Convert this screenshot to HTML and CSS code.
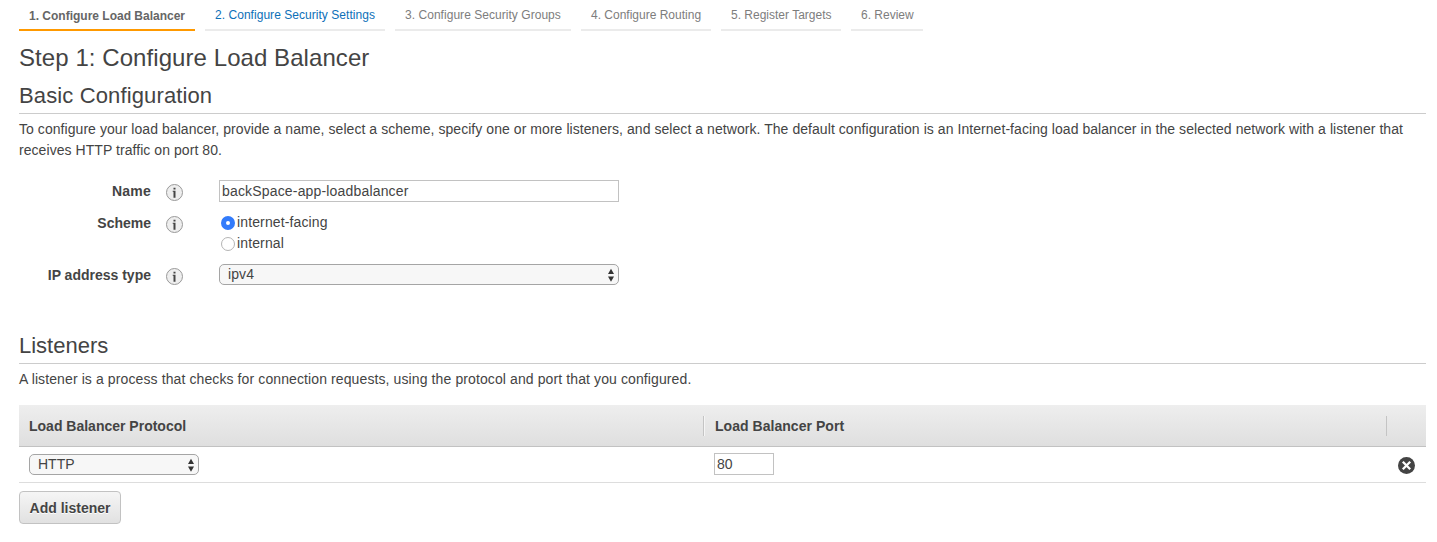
FILE: index.html
```html
<!DOCTYPE html>
<html lang="en">
<head>
<meta charset="utf-8">
<title>Configure Load Balancer</title>
<link rel="stylesheet" href="styles.css">
</head>
<body>
<nav class="steps">
  <a class="step step-active"><span>1. Configure Load Balancer</span></a>
  <a class="step step-next"><span>2. Configure Security Settings</span></a>
  <a class="step w176"><span>3. Configure Security Groups</span></a>
  <a class="step w130"><span>4. Configure Routing</span></a>
  <a class="step w120"><span>5. Register Targets</span></a>
  <a class="step w72"><span>6. Review</span></a>
</nav>
<main>
  <h1><span>Step 1: Configure Load Balancer</span></h1>
  <h2 class="basic-title"><span>Basic Configuration</span></h2>
  <p class="intro"><span>To configure your load balancer, provide a name, select a scheme, specify one or more listeners, and select a network. The default configuration is an Internet-facing load balancer in the selected network with a listener that</span><br><span>receives HTTP traffic on port 80.</span></p>
  <form class="form">
    <div class="row row-name">
      <label class="label label-name">Name</label>
      <svg class="info" viewBox="0 0 18 18"><circle cx="9.500" cy="9.500" r="8" fill="#eee" stroke="#999"/><path d="M8.500 4.800h2v1.700h-2zM7.700 7.700h2.800v7h-2V8.700h-.8z" fill="#444"/></svg>
      <input class="text name" type="text" value="backSpace-app-loadbalancer">
    </div>
    <div class="row row-scheme">
      <label class="label">Scheme</label>
      <svg class="info" viewBox="0 0 18 18"><circle cx="9.500" cy="9.500" r="8" fill="#eee" stroke="#999"/><path d="M8.500 4.800h2v1.700h-2zM7.700 7.700h2.800v7h-2V8.700h-.8z" fill="#444"/></svg>
      <div class="radios">
        <label><input type="radio" name="scheme" checked><span>internet-facing</span></label>
        <label><input type="radio" name="scheme"><span>internal</span></label>
      </div>
    </div>
    <div class="row row-ip">
      <label class="label">IP address type</label>
      <svg class="info" viewBox="0 0 18 18"><circle cx="9.500" cy="9.500" r="8" fill="#eee" stroke="#999"/><path d="M8.500 4.800h2v1.700h-2zM7.700 7.700h2.800v7h-2V8.700h-.8z" fill="#444"/></svg>
      <div class="select ip"><span>ipv4</span><svg class="arrows" viewBox="0 0 8 14"><path d="M1 6L4 .8 7 6zM1 8.500h6L4 13.700z" fill="#333"/></svg></div>
    </div>
  </form>
  <h2><span>Listeners</span></h2>
  <p class="listeners-text"><span>A listener is a process that checks for connection requests, using the protocol and port that you configured.</span></p>
  <section class="table">
    <div class="thead">
      <div class="col-protocol">Load Balancer Protocol</div>
      <div class="col-port">Load Balancer Port</div>
      <div class="col-remove"></div>
    </div>
    <div class="trow">
      <div class="cell-protocol"><div class="select http"><span>HTTP</span><svg class="arrows" viewBox="0 0 8 14"><path d="M1 6L4 .8 7 6zM1 8.500h6L4 13.700z" fill="#333"/></svg></div></div>
      <input class="text port" type="text" value="80">
      <svg class="remove" viewBox="0 0 18 18"><circle cx="9.500" cy="9.500" r="8.500" fill="#444"/><path d="M5.800 5.800l7.400 7.400M13.200 5.800l-7.400 7.400" stroke="#fff" stroke-width="2.300"/></svg>
    </div>
  </section>
  <button class="add" type="button">Add listener</button>
</main>
</body>
</html>
```
FILE: styles.css
```css
* { box-sizing: border-box; }
body {
  margin: 0;
  padding: 0 11px 0 19px;
  background: #fff;
  color: #444;
  font: 14px/21px "Liberation Sans", Arial, sans-serif;
  overflow: hidden;
}
span { white-space: nowrap; }
.steps { display: flex; gap: 10px; height: 31px; font-size: 12px; line-height: 18px; }
.step { padding: 6px 0 0 10px; border-bottom: 2px solid #ebebeb; color: #7d7d7d; }
.step-active { width: 176px; padding-top: 7px; border-color: #f90; color: #666; font-weight: bold; }
.step-next { width: 180px; color: #0d70b8; letter-spacing: .04px; }
.w176 { width: 176px; letter-spacing: .04px; }
.w130 { width: 130px; }
.w120 { width: 120px; }
.w72 { width: 72px; }
h1, h2, p { margin: 0; font-weight: normal; }
h1 { height: 49px; padding-top: 12px; font-size: 24px; line-height: 30px; letter-spacing: .07px; }
h2 { height: 34px; padding-top: 2px; border-bottom: 1px solid #ccc; font-size: 22px; line-height: 28px; }
.basic-title { letter-spacing: .13px; }
.intro { padding-top: 5px; height: 66px; letter-spacing: .058px; }
.row { display: flex; align-items: flex-start; }
.row-name { height: 32px; }
.row-scheme { height: 52px; }
.row-ip { height: 66px; }
.label { width: 132px; padding-top: 1px; text-align: right; font-weight: bold; }
.label-name { letter-spacing: .2px; }
.info { flex: none; width: 18px; height: 18px; margin: 3px 35px 0 14px; }
.text { height: 22px; margin: 0; padding: 0 2px; border: 1px solid #c2c2c2; border-radius: 0; background: #fff; color: #444; font: inherit; outline: none; }
.name { width: 400px; margin-left: 1px; letter-spacing: .17px; }
.radios { display: flex; flex-direction: column; margin-left: 3px; letter-spacing: .13px; }
.radios label { display: flex; align-items: center; height: 21px; }
.radios input { appearance: none; width: 14px; height: 14px; margin: 0 2px 0 0; border: 1px solid #b4b4b4; border-radius: 50%; background: #fff; }
.radios input:checked { border: 5px solid #327bfb; }
.select { display: flex; align-items: center; justify-content: space-between; height: 21px; padding: 0 3px 0 8px; border: 1px solid #a5a5a5; border-radius: 5px; background: #f7f7f7; line-height: 19px; }
.arrows { width: 8px; height: 14px; }
.ip { width: 400px; margin-left: 1px; letter-spacing: .1px; }
.listeners-text { height: 41px; padding-top: 5px; letter-spacing: .107px; }
.thead { display: flex; align-items: center; height: 42px; border-bottom: 1px solid #c2c2c2; background: linear-gradient(#eee, #dfdfdf); font-weight: bold; line-height: 20px; }
.col-protocol { width: 684px; padding-left: 10px; }
.col-port { width: 683px; padding-left: 11px; border-left: 1px solid #c4c4c4; box-shadow: inset 1px 0 #f5f5f5; letter-spacing: .04px; }
.col-remove { width: 40px; height: 20px; border-left: 1px solid #c4c4c4; }
.trow { display: flex; align-items: center; height: 36px; border-bottom: 1px solid #ddd; }
.cell-protocol { width: 695px; padding-left: 10px; }
.http { width: 170px; }
.port { width: 60px; margin-top: -1px; }
.remove { width: 18px; height: 18px; margin: 1px 11px 0 auto; }
.add { display: block; width: 102px; height: 33px; margin-top: 8px; padding: 1px 0 0; border: 1px solid #c2c2c2; border-radius: 4px; background: linear-gradient(#f5f5f5, #e1e1e1); color: #444; font: bold 14px/20px "Liberation Sans", Arial, sans-serif; text-shadow: 0 1px #fff; }
```
